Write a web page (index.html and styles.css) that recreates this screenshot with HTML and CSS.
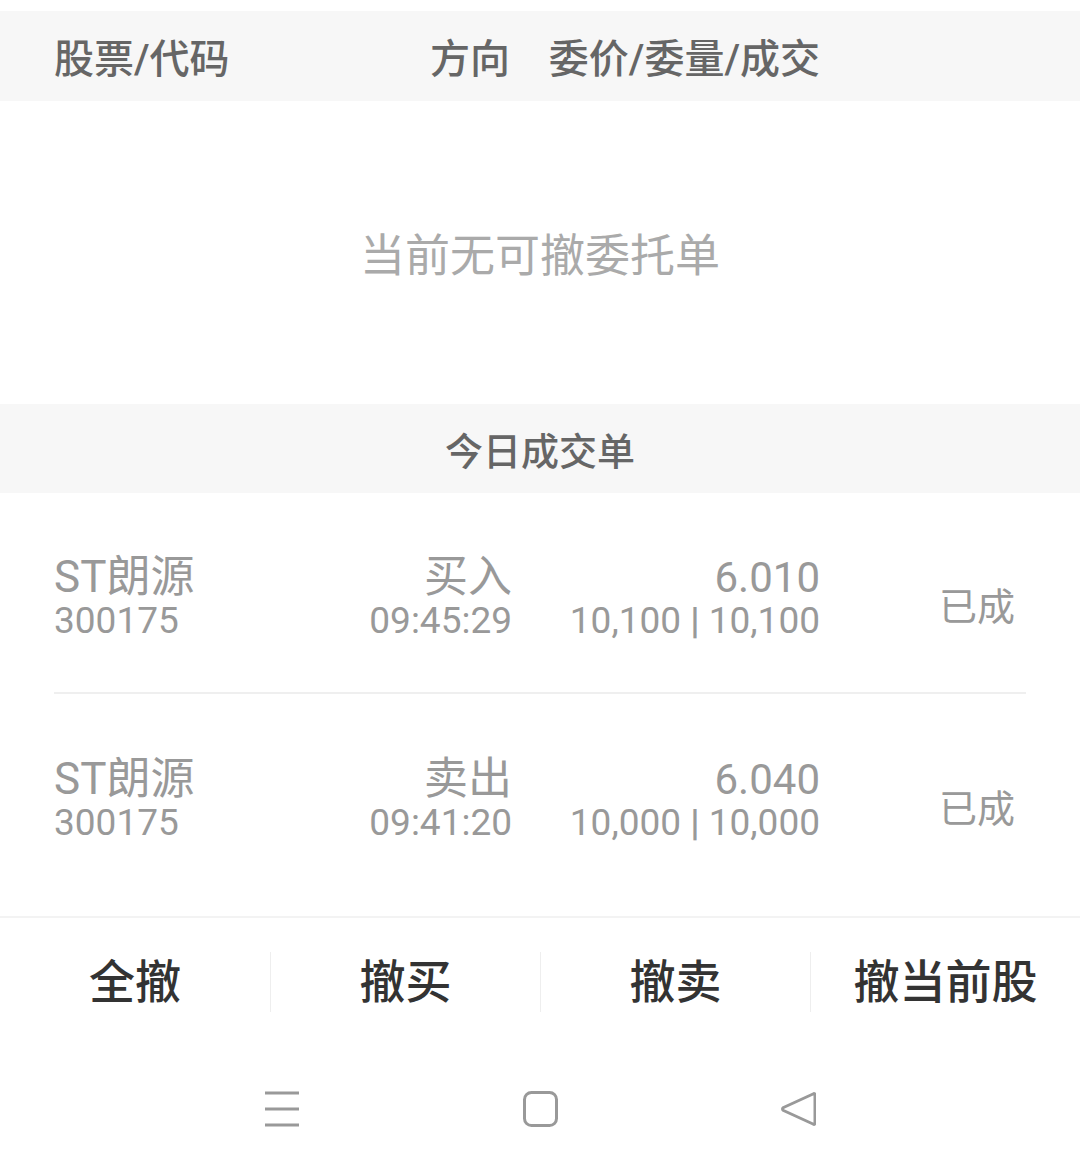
FILE: index.html
```html
<!DOCTYPE html>
<html>
<head>
    <meta charset="utf-8">
    <title>撤单</title>
    <link rel="stylesheet" href="styles.css">
</head>
<body>
    <div class="page">
        <div class="thead">
            <div class="cols">
                <span class="c-name">股票/代码</span>
                <span class="c-dir">方向</span>
                <span class="c-price">委价/委量/成交</span>
                <span class="c-status"></span>
            </div>
        </div>

        <div class="empty">当前无可撤委托单</div>

        <div class="band">今日成交单</div>

        <div class="trades">
            <div class="trade cols">
                <div class="c-name">
                    <div class="big">ST朗源</div>
                    <div class="small">300175</div>
                </div>
                <div class="c-dir">
                    <div class="big">买入</div>
                    <div class="small">09:45:29</div>
                </div>
                <div class="c-price">
                    <div class="big num">6.010</div>
                    <div class="small">10,100 <b class="pipe">|</b> 10,100</div>
                </div>
                <div class="c-status">已成</div>
            </div>
            <div class="trade cols">
                <div class="c-name">
                    <div class="big">ST朗源</div>
                    <div class="small">300175</div>
                </div>
                <div class="c-dir">
                    <div class="big">卖出</div>
                    <div class="small">09:41:20</div>
                </div>
                <div class="c-price">
                    <div class="big num">6.040</div>
                    <div class="small">10,000 <b class="pipe">|</b> 10,000</div>
                </div>
                <div class="c-status">已成</div>
            </div>
        </div>

        <div class="actions">
            <div class="action">全撤</div>
            <div class="action">撤买</div>
            <div class="action">撤卖</div>
            <div class="action">撤当前股</div>
        </div>

        <div class="navbar">
            <svg class="nav-icon" viewBox="0 0 36 36" width="36" height="36">
                <path d="M1 2 H35 M1 18 H35 M1 34 H35" stroke="#999" stroke-width="3" fill="none"/>
            </svg>
            <svg class="nav-icon" viewBox="0 0 36 36" width="36" height="36">
                <rect x="2.5" y="1.5" width="32" height="33" rx="7" stroke="#999" stroke-width="3" fill="none"/>
            </svg>
            <svg class="nav-icon" viewBox="0 0 36 36" width="36" height="36">
                <path d="M33 3 Q35 1.8 35 4.5 V31.5 Q35 34.2 33 33 L3.5 19.5 Q1.5 18 3.5 16.5 Z" stroke="#999" stroke-width="3" stroke-linejoin="round" fill="none"/>
            </svg>
        </div>
    </div>
</body>
</html>
```

FILE: styles.css
```css
body {
    margin: 0;
    padding: 0;
    background: #fff;
}

.page {
    width: 1080px;
    height: 1176px;
    overflow: hidden;
    font-family: Roboto, "Noto Sans CJK SC", sans-serif;
    display: flex;
    flex-direction: column;
}

/* shared column grid */
.cols {
    display: grid;
    grid-template-columns: 300px 158px 308px 1fr;
    margin: 0 54px;
    align-items: center;
}

.c-dir,
.c-price,
.c-status {
    text-align: right;
}

.c-status {
    padding-right: 11px;
}

.thead {
    margin-top: 11px;
    height: 90px;
    background: #f7f7f7;
    display: flex;
    align-items: center;
}

.thead .cols {
    width: 972px;
    font-size: 40px;
    font-weight: 500;
    color: #666;
}

.thead .c-dir {
    padding-right: 2px;
}

.empty {
    height: 303px;
    display: flex;
    align-items: center;
    justify-content: center;
    font-size: 45px;
    color: #aaa;
}

.band {
    height: 89px;
    background: #f7f7f7;
    display: flex;
    align-items: center;
    justify-content: center;
    font-size: 38px;
    font-weight: 500;
    color: #666;
}

.trades {
    height: 423px;
}

.trade {
    height: 201px;
    padding-top: 12px;
    box-sizing: border-box;
    color: #999;
    border-bottom: 2px solid #efefef;
}

.trade:last-child {
    border-bottom: none;
}

.trade .big {
    font-size: 44px;
    line-height: 43px;
}

.trade .big.num {
    font-size: 42px;
}

.trade .small {
    font-size: 37px;
    line-height: 43px;
}

.pipe {
    font-weight: bold;
}

.trade .c-status {
    font-size: 38px;
    padding-top: 10px;
}

.actions {
    border-top: 2px solid #f3f3f3;
    height: 128px;
    display: grid;
    grid-template-columns: repeat(4, 1fr);
    align-items: center;
}

.action {
    height: 60px;
    line-height: 60px;
    text-align: center;
    font-size: 46px;
    font-weight: 500;
    color: #333;
    border-left: 1px solid #eee;
}

.action:first-child {
    border-left: none;
}

.navbar {
    height: 130px;
    display: flex;
    justify-content: center;
    align-items: center;
    gap: 222px;
    padding-bottom: 4px;
    box-sizing: border-box;
}
```
